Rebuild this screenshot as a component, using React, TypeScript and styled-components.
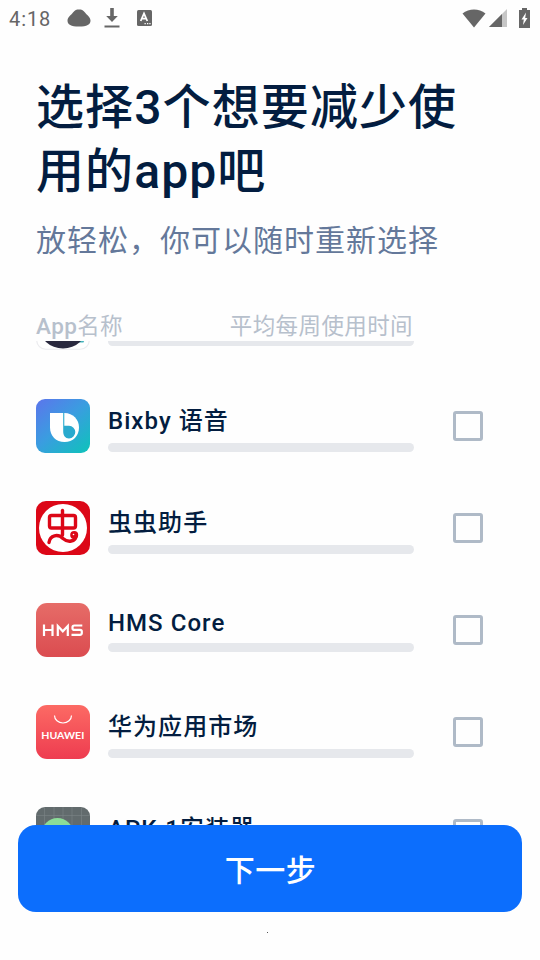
import React from 'react';
import styled, { createGlobalStyle } from 'styled-components';

const GlobalStyle = createGlobalStyle`
  * { box-sizing: border-box; }
  body { margin: 0; background: #fefefe; }
`;

const Screen = styled.div`
  width: 540px;
  height: 960px;
  display: flex;
  flex-direction: column;
  overflow: hidden;
  background: #fefefe;
  color: #031d40;
  font-family: Roboto, 'Noto Sans CJK SC', sans-serif;
`;

const StatusBar = styled.div`
  height: 36px;
  flex: none;
  display: flex;
  align-items: center;
  justify-content: space-between;
  padding: 0 8px 0 9px;
  color: #666;
`;

const StatusGroup = styled.div`
  display: flex;
  align-items: center;
`;

const Clock = styled.span`
  width: 58px;
  font-size: 20px;
  line-height: 36px;
  letter-spacing: 0.9px;
  padding-top: 2px;
`;

const Glyph = styled.svg<{ $gap?: number }>`
  display: block;
  flex: none;
  margin-right: ${({ $gap = 0 }) => $gap}px;
`;

const Heading = styled.header`
  flex: none;
  height: 276px;
  padding: 40px 36px 0;
`;

const Title = styled.h1`
  margin: 0;
  font-size: 48px;
  font-weight: 500;
  line-height: 64px;
  letter-spacing: 1.1px;
`;

const Subtitle = styled.p`
  margin: 15px 0 0;
  font-size: 30px;
  line-height: 44px;
  letter-spacing: 1px;
  font-weight: 400;
  color: #64789a;
`;

const ColumnHeads = styled.div`
  flex: none;
  display: flex;
  justify-content: space-between;
  width: 413px;
  height: 29px;
  padding-left: 36px;
  color: #b7c0cc;
  font-size: 22.5px;
  line-height: 29px;
  letter-spacing: 0.4px;
  font-weight: 400;
`;

const Latin = styled.span`
  font-weight: 500;
`;

const AppList = styled.main`
  flex: none;
  height: 484px;
  overflow: hidden;
  display: flex;
  flex-direction: column;
  justify-content: flex-end;
`;

const AppRow = styled.div`
  flex: none;
  height: 102px;
  display: flex;
  align-items: flex-start;
  padding-left: 36px;

  &:last-child { height: 18px; }
`;

const IconSvg = styled.svg`
  display: block;
  flex: none;
  width: 54px;
  height: 54px;
  margin-right: 18px;
`;

const AppInfo = styled.div`
  width: 306px;
  height: 54px;
  flex: none;
`;

const AppName = styled.div<{ $latin?: boolean }>`
  height: ${({ $latin }) => ($latin ? 40 : 44)}px;
  font-size: 24px;
  line-height: ${({ $latin }) => ($latin ? 40 : 44)}px;
  font-weight: 500;
  letter-spacing: 1.05px;
  white-space: nowrap;
`;

const UsageBar = styled.div`
  height: 9px;
  border-radius: 5px;
  background: #e6e8ec;
`;

const CheckBox = styled.div`
  width: 30px;
  height: 30px;
  margin: 12px 0 0 39px;
  border: 3px solid #afbac7;
  border-radius: 3px;
`;

const NextButton = styled.button`
  flex: none;
  width: 504px;
  height: 87px;
  margin: 0 18px;
  padding: 5px 0 0 1px;
  border: 0;
  border-radius: 18px;
  background: #0c6efd;
  color: #fff;
  font: 500 30px/82px Roboto, 'Noto Sans CJK SC', sans-serif;
  letter-spacing: 0.5px;
`;

const Dot = styled.div`
  width: 1px;
  height: 1px;
  margin: 20px 0 0 267px;
  background: #555;
`;

const AvatarIcon = () => (
  <IconSvg viewBox="0 0 54 54">
    <rect x="0.75" y="0.75" width="52.5" height="51.5" rx="9" fill="#fff" stroke="#ececef" strokeWidth="1.2" />
    <path d="M36 42h13l-1.500 3.500H36z" fill="#45b5bd" />
    <ellipse cx="27" cy="29" rx="24" ry="22.5" fill="#29283e" />
  </IconSvg>
);

const BixbyIcon = () => (
  <IconSvg viewBox="0 0 54 54">
    <defs>
      <linearGradient id="bixby" x1="0" y1="0" x2="0.9" y2="1">
        <stop offset="0" stopColor="#5c75ec" />
        <stop offset="0.5" stopColor="#3a9de0" />
        <stop offset="1" stopColor="#11c0bd" />
      </linearGradient>
    </defs>
    <rect width="54" height="54" rx="9" fill="url(#bixby)" />
    <path d="M14 14h14.500C37 14 43 20.500 43 28.500 43 37 37 43 28.500 43S14 37 14 28.500z" fill="#fff" />
    <path d="M27.200 13.500h1.100v13.300h4.700a6.300 6.300 0 1 1 0 12.600c-3.700 0-5.800-3-5.800-7z" fill="#29aace" />
  </IconSvg>
);

const ChongIcon = () => (
  <IconSvg viewBox="0 0 54 54">
    <rect width="54" height="54" rx="10" fill="#dc0717" />
    <circle cx="27" cy="27" r="24" fill="#fff" />
    <g fill="none" stroke="#dc0717" strokeWidth="3.4" strokeLinecap="round" strokeLinejoin="round">
      <rect x="13.500" y="14.500" width="26" height="12.500" rx="2" />
      <path d="M26.500 9.500V34" />
      <path d="M13 41.500C14 34 22 32.500 27 37.500c5 4.500 12.500 3 13-2.500" />
    </g>
    <circle cx="38.200" cy="34" r="4" fill="#dc0717" />
    <circle cx="37.500" cy="33.500" r="0.8" fill="#fff" />
  </IconSvg>
);

const HmsIcon = () => (
  <IconSvg viewBox="0 0 54 54">
    <defs>
      <linearGradient id="hms" x1="0" y1="0" x2="0" y2="1">
        <stop offset="0" stopColor="#e66c68" />
        <stop offset="1" stopColor="#db4c50" />
      </linearGradient>
    </defs>
    <rect width="54" height="54" rx="11" fill="url(#hms)" />
    <g fill="none" stroke="#fff" strokeWidth="2.2">
      <path d="M8 21.500v11.500M16.500 21.500v11.500M8 27h8.500" />
      <path d="M21.800 33v-10l5 5.300 5-5.300v10" />
      <path d="M46.300 22.500h-8q-1.800 0-1.800 1.700v1q0 1.700 1.800 1.700h5.700q1.800 0 1.800 1.700v1.500q0 1.700-1.800 1.700h-8.500" />
    </g>
  </IconSvg>
);

const HuaweiIcon = () => (
  <IconSvg viewBox="0 0 54 54">
    <defs>
      <linearGradient id="huawei" x1="0" y1="0" x2="0" y2="1">
        <stop offset="0" stopColor="#fc6a64" />
        <stop offset="1" stopColor="#ee3c50" />
      </linearGradient>
    </defs>
    <rect width="54" height="54" rx="11" fill="url(#huawei)" />
    <path d="M18.500 10.500a8.500 7.500 0 0 0 17 0" fill="none" stroke="#fff" strokeWidth="1.200" />
    <text x="5.300" y="34.300" textLength="43" lengthAdjust="spacingAndGlyphs" fontFamily="Lato, sans-serif" fontSize="9.900" fontWeight="700" fill="#fff">HUAWEI</text>
  </IconSvg>
);

const InstallerIcon = () => (
  <IconSvg viewBox="0 0 54 54">
    <rect width="54" height="54" rx="9" fill="#626b6d" />
    <path d="M8.500 0v54M18 0v54M27 0v54M36 0v54M45.500 0v54M0 8.500h54" stroke="#7c8587" strokeWidth="0.6" />
    <circle cx="21.500" cy="27" r="16" fill="#8bdc98" />
  </IconSvg>
);

const apps = [
  { name: '', latin: true, Icon: AvatarIcon },
  { name: 'Bixby 语音', Icon: BixbyIcon },
  { name: '虫虫助手', Icon: ChongIcon },
  { name: 'HMS Core', latin: true, Icon: HmsIcon },
  { name: '华为应用市场', Icon: HuaweiIcon },
  { name: 'APK.1安装器', Icon: InstallerIcon },
];

export default function App() {
  return (
    <Screen>
      <GlobalStyle />
      <StatusBar>
        <StatusGroup>
          <Clock>4:18</Clock>
          <Glyph width="24" height="18" viewBox="0 0 24 18" $gap={13}>
            <path d="M.5 11.500C.5 8.500 4 6 6 3.500 8 1 9.500.5 12 .5s4 .5 6 3c2 2.500 5.500 5 5.500 8C23.500 15.500 20 17.500 12 17.500S.5 15.500.5 11.500z" fill="currentColor" />
          </Glyph>
          <Glyph width="16" height="20" viewBox="0 0 16 20" $gap={17}>
            <path d="M6.200 0h3.600v8h4L8 14 2.200 8h4zM.5 17.500h15v2H.5z" fill="currentColor" />
          </Glyph>
          <Glyph width="15" height="16" viewBox="0 0 15 16">
            <rect width="15" height="16" rx="1.500" fill="currentColor" />
            <path d="M3.700 11 7 3.500 10.300 11M5 8.600h4" fill="none" stroke="#fff" strokeWidth="1.800" />
            <path d="M7.500 13.700h1.300M10 13.700h1.300M12.300 13.700h1.300" stroke="#fff" strokeWidth="1.200" />
          </Glyph>
        </StatusGroup>
        <StatusGroup>
          <Glyph width="24" height="19" viewBox="0 0 24 19" $gap={3}>
            <path d="M.5 4.500C7-.8 17-.8 23.500 4.500L12 18.500z" fill="currentColor" />
          </Glyph>
          <Glyph width="18" height="18" viewBox="0 0 18 18" $gap={12}>
            <path d="M18 0v18H0z" fill="#c6c6c6" />
            <path d="M13 5v13H0z" fill="currentColor" />
          </Glyph>
          <Glyph width="11" height="20" viewBox="0 0 11 20" $gap={2}>
            <path d="M3 0h5v2h3v18H0V2h3z" fill="currentColor" />
            <path d="M7 4.500 2.500 11.500h2.300L4 17l4.500-7H6.200z" fill="#fff" />
          </Glyph>
        </StatusGroup>
      </StatusBar>
      <Heading>
        <Title>选择3个想要减少使<br />用的app吧</Title>
        <Subtitle>放轻松，你可以随时重新选择</Subtitle>
      </Heading>
      <ColumnHeads>
        <span><Latin>App</Latin>名称</span>
        <span>平均每周使用时间</span>
      </ColumnHeads>
      <AppList>
        {apps.map(({ name, latin, Icon }, index) => (
          <AppRow key={index}>
            <Icon />
            <AppInfo>
              <AppName $latin={latin}>{name}</AppName>
              <UsageBar />
            </AppInfo>
            <CheckBox />
          </AppRow>
        ))}
      </AppList>
      <NextButton>下一步</NextButton>
      <Dot />
    </Screen>
  );
}
